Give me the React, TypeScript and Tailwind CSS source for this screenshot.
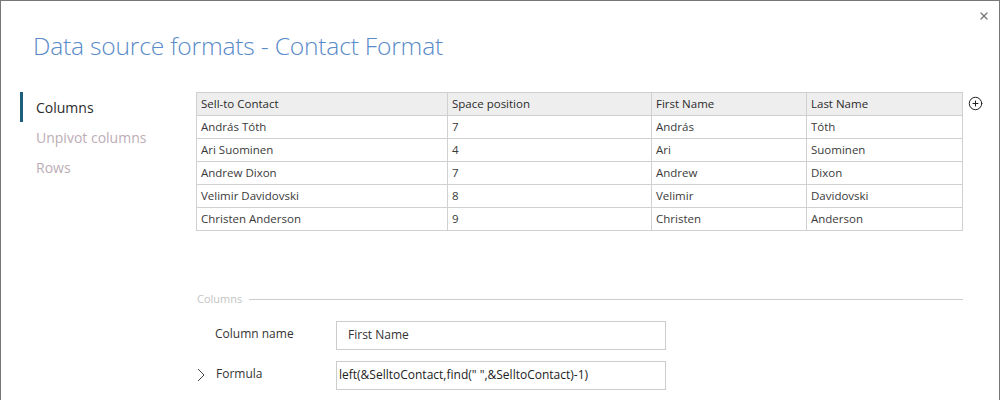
import { CirclePlus, X } from 'lucide-react';

const rows = [
  ['András Tóth', '7', 'András', 'Tóth'],
  ['Ari Suominen', '4', 'Ari', 'Suominen'],
  ['Andrew Dixon', '7', 'Andrew', 'Dixon'],
  ['Velimir Davidovski', '8', 'Velimir', 'Davidovski'],
  ['Christen Anderson', '9', 'Christen', 'Anderson'],
];

const headers = ['Sell-to Contact', 'Space position', 'First Name', 'Last Name'];
const colWidths = ['w-[251px]', 'w-[204px]', 'w-[155px]', 'w-[156px]'];

export default function App() {
  return (
    <div
      className="relative h-[400px] w-[1000px] overflow-hidden border-x border-t border-[#777777] bg-white text-[#333333]"
      style={{ fontFamily: '"Open Sans", "Noto Sans", sans-serif' }}
    >
      {/* Close */}
      <button type="button" className="absolute right-[9px] top-[9px] text-[#777777]">
        <X size={12} strokeWidth={2.5} />
      </button>

      {/* Title */}
      <h1 className="pl-[32px] pt-[29px] text-[24.6px] font-light leading-[32px] tracking-[-0.2px] text-[#5a8bc9]">
        Data source formats - Contact Format
      </h1>

      <div className="mt-[30px] flex">
        {/* Side nav */}
        <nav className="flex w-[195px] shrink-0 flex-col pl-[19px]">
          <div className="flex h-[30px] items-center border-l-[3px] border-[#1d5f7c] pl-[13px] text-[14px] text-[#2b2b2b]">
            Columns
          </div>
          <div className="flex h-[30px] items-center pl-[16px] text-[14px] text-[#bcadb6]">Unpivot columns</div>
          <div className="flex h-[30px] items-center pl-[16px] text-[14px] text-[#bcadb6]">Rows</div>
        </nav>

        {/* Content */}
        <div className="flex-1">
          <div className="flex items-start">
            <table className="border-collapse text-[11.5px]">
              <thead>
                <tr className="bg-[#eeeeee]">
                  {headers.map((h, i) => (
                    <th
                      key={h}
                      className={`${colWidths[i]} h-[23px] border border-[#d0d0d0] px-[4px] text-left font-normal text-[#2b2b2b]`}
                    >
                      {h}
                    </th>
                  ))}
                </tr>
              </thead>
              <tbody>
                {rows.map((r) => (
                  <tr key={r[0]}>
                    {r.map((c, i) => (
                      <td key={i} className="h-[23px] border border-[#d0d0d0] px-[4px] text-[#3a3a3a]">
                        {c}
                      </td>
                    ))}
                  </tr>
                ))}
              </tbody>
            </table>
            <CirclePlus size={15} strokeWidth={1.6} className="ml-[5px] mt-[4px] text-[#222222]" />
          </div>

          {/* Columns section */}
          <div className="mt-[60px] flex w-[767px] items-center gap-[7px]">
            <span className="pl-[1px] text-[11px] text-[#c4c4c4]">Columns</span>
            <div className="h-px flex-1 bg-[#cccccc]" />
          </div>

          <div className="mt-[13px] flex items-center">
            <label className="w-[140px] pl-[19px] pb-[3px] text-[12px] text-[#333333]">Column name</label>
            <div className="flex h-[29px] w-[330px] items-center border border-[#cccccc] pl-[11px] text-[12px] text-[#333333]">
              First Name
            </div>
          </div>

          <div className="mt-[11px] flex items-center">
            <div className="flex w-[140px] items-center pb-[1px]">
              <svg width="8" height="14" viewBox="0 0 8 14" className="ml-[1px] text-[#444444]">
                <polyline points="1,1 7,7 1,13" fill="none" stroke="currentColor" strokeWidth="1" />
              </svg>
              <span className="ml-[11px] pb-[2px] text-[12px] text-[#333333]">Formula</span>
            </div>
            <div className="flex h-[29px] w-[330px] items-center border border-[#cccccc] pl-[2px] text-[12px] text-[#222222]">
              left(&amp;SelltoContact,find(" ",&amp;SelltoContact)-1)
            </div>
          </div>
        </div>
      </div>
    </div>
  );
}
